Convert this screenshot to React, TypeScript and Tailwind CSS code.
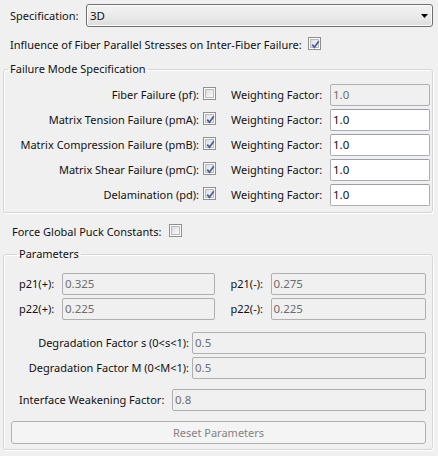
import type { ReactNode } from "react";

function Check({ checked }: { checked?: boolean }) {
  return (
    <span className="relative inline-block h-[13px] w-[13px] shrink-0 border border-[#8e8f8f] bg-white">
      <span className="absolute inset-[1px] border border-[#b8bcc0] bg-gradient-to-br from-[#dcdde0] to-[#fbfbfb]" />
      {checked && (
        <svg className="absolute left-[1px] top-[1px]" width="11" height="11" viewBox="0 0 11 11">
          <path d="M2.2 5.6 L4.4 8.2 L8.8 2.2" fill="none" stroke="#4b5f9a" strokeWidth="1.8" />
        </svg>
      )}
    </span>
  );
}

function Field({ value, disabled, className = "" }: { value: string; disabled?: boolean; className?: string }) {
  return (
    <div
      className={`flex h-[22px] items-center rounded-[2px] border px-[2px] text-[11.5px] ${
        disabled ? "border-[#afafaf] bg-[#f0f0f0] text-[#6d6d6d]" : "border-[#abadb3] border-t-[#9a9ea6] bg-white text-[#111]"
      } ${className}`}
    >
      {value}
    </div>
  );
}

function Group({ title, titleOffset, className = "", children }: { title: string; titleOffset: string; className?: string; children: ReactNode }) {
  return (
    <fieldset className={`ml-[3px] w-[430px] rounded-[3px] border border-[#d5d5d5] shadow-[inset_1px_1px_0_#fff,1px_1px_0_#fff] ${className}`}>
      <legend className={`h-[16px] px-[2px] leading-[16px] ${titleOffset}`}>{title}</legend>
      {children}
    </fieldset>
  );
}

const modes = [
  { label: "Fiber Failure (pf):", checked: false },
  { label: "Matrix Tension Failure (pmA):", checked: true },
  { label: "Matrix Compression Failure (pmB):", checked: true },
  { label: "Matrix Shear Failure (pmC):", checked: true },
  { label: "Delamination (pd):", checked: true },
];

export default function App() {
  return (
    <div className="h-[456px] w-[438px] overflow-hidden whitespace-nowrap bg-[#f0f0f0] pt-[4px] font-['Noto_Sans',sans-serif] text-[11px] leading-[16px] text-[#111]">
      <div className="flex h-[23px] items-center pl-[10px] pr-[5px]">
        <span className="w-[76px]">Specification:</span>
        <div className="flex h-[23px] flex-1 items-center justify-between rounded-[3px] border border-[#707070] bg-gradient-to-b from-[#f2f2f2] via-[#ebebeb] to-[#dddddd] pl-[3px] pr-[4px] text-[11.5px] shadow-[inset_0_0_0_1px_#fcfcfc]">
          <span>3D</span>
          <svg width="7" height="4" viewBox="0 0 7 4">
            <path d="M0 0 H7 L3.5 4 Z" fill="#000" />
          </svg>
        </div>
      </div>

      <div className="mt-[10px] flex h-[16px] items-center pl-[10px]">
        <span>Influence of Fiber Parallel Stresses on Inter-Fiber Failure:</span>
        <span className="ml-[6px]">
          <Check checked />
        </span>
      </div>

      <Group title="Failure Mode Specification" titleOffset="ml-[4px]" className="mt-[8px] pb-[6px] pt-[7px]">
        <div className="flex flex-col gap-[3px]">
          {modes.map((m, i) => (
            <div key={i} className="flex items-center">
              <span className="w-[195px] text-right">{m.label}</span>
              <span className="ml-[4px]">
                <Check checked={m.checked} />
              </span>
              <span className="ml-[15px] w-[99px]">Weighting Factor:</span>
              <Field value="1.0" disabled={!m.checked} className="w-[100px]" />
            </div>
          ))}
        </div>
      </Group>

      <div className="mt-[11px] flex h-[16px] items-center pl-[12px]">
        <span>Force Global Puck Constants:</span>
        <span className="ml-[8px]">
          <Check />
        </span>
      </div>

      <Group title="Parameters" titleOffset="ml-[6px]" className="mt-[6px] pb-[5px] pl-[7px] pr-[6px] pt-[11px]">
        <div className="grid grid-cols-2 gap-x-[16px] gap-y-[3px] pl-[8px]">
          <div className="flex items-center">
            <span className="w-[43px]">p21(+):</span>
            <Field value="0.325" disabled className="flex-1" />
          </div>
          <div className="flex items-center">
            <span className="w-[40px]">p21(-):</span>
            <Field value="0.275" disabled className="flex-1" />
          </div>
          <div className="flex items-center">
            <span className="w-[43px]">p22(+):</span>
            <Field value="0.225" disabled className="flex-1" />
          </div>
          <div className="flex items-center">
            <span className="w-[40px]">p22(-):</span>
            <Field value="0.225" disabled className="flex-1" />
          </div>
        </div>

        <div className="mt-[12px] flex flex-col gap-[3px] pl-[8px]">
          <div className="flex items-center">
            <span className="w-[173px] pr-[3px] text-right">Degradation Factor s (0&lt;s&lt;1):</span>
            <Field value="0.5" disabled className="flex-1" />
          </div>
          <div className="flex items-center">
            <span className="w-[173px] pr-[3px] text-right">Degradation Factor M (0&lt;M&lt;1):</span>
            <Field value="0.5" disabled className="flex-1" />
          </div>
        </div>

        <div className="mt-[10px] flex items-center pl-[8px]">
          <span className="w-[153px]">Interface Weakening Factor:</span>
          <Field value="0.8" disabled className="flex-1" />
        </div>

        <button
          disabled
          className="mt-[10px] flex h-[23px] w-full items-center justify-center rounded-[3px] border border-[#adb2b5] bg-[#f4f4f4] text-[#838383]"
        >
          Reset Parameters
        </button>
      </Group>
    </div>
  );
}
